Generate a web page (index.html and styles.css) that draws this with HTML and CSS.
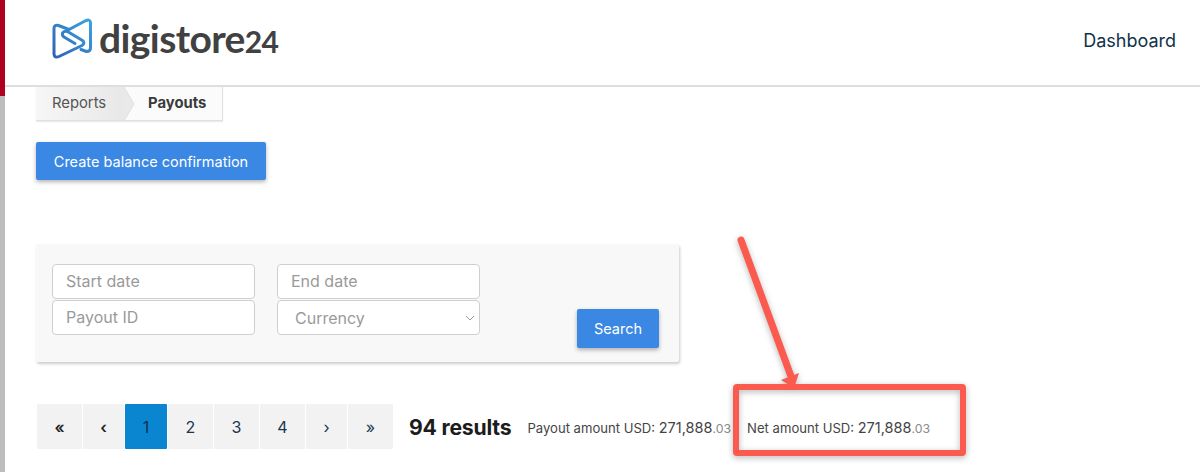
FILE: index.html
```html
<!DOCTYPE html>
<html lang="en">
<head>
<meta charset="utf-8">
<title>Payouts</title>
<link rel="stylesheet" href="styles.css">
</head>
<body>
<div class="rail"><div class="rail-top"></div></div>
<div class="page">
  <header class="header">
    <a class="logo">
      <svg class="logo-mark" width="42" height="42" viewBox="0 0 42 42" fill="none">
        <defs>
          <linearGradient id="lg" x1="0" y1="1" x2="1" y2="0">
            <stop offset="0" stop-color="#2f62b5"/>
            <stop offset="1" stop-color="#38a4df"/>
          </linearGradient>
        </defs>
        <path d="M29 31.500 L34.500 33.500 Q38.500 33.500 38.500 30 L38.500 4.500 Q38 1 34 2.500 L17 11.500 L6.500 7.500 Q2 6.500 2 10.500 L2 36 Q2.500 40.500 7 38.500 L30 27.500 Q33.500 25 30.500 22.500 L15.500 13.500 Q12 12.500 10.500 15 Q10 17.500 12 19 L23 25.500" stroke="url(#lg)" stroke-width="3" stroke-linecap="round" stroke-linejoin="round"/>
      </svg>
      <span class="logo-text">digistore<span class="logo-num">24</span></span>
    </a>
    <a class="nav-link">Dashboard</a>
  </header>
  <main class="main">
    <nav class="crumbs">
      <span class="crumb crumb-first">Reports</span>
      <svg class="crumb-arrow" width="11" height="34" viewBox="0 0 11 34"><path d="M0 0 L10 17 L0 34 Z" fill="#e9e9e9"/><path d="M0 0 L10 17 L0 34" fill="none" stroke="#e0e0e0"/></svg>
      <span class="crumb crumb-current">Payouts</span>
    </nav>
    <button class="btn btn-create">Create balance confirmation</button>
    <section class="filters">
      <div class="fields">
        <input class="field" placeholder="Start date">
        <input class="field" placeholder="End date">
        <input class="field" placeholder="Payout ID">
        <div class="field select">
          <span>Currency</span>
          <svg width="10" height="6" viewBox="0 0 10 6" fill="none"><path d="M1 1 L5 5 L9 1" stroke="#9a9a9a"/></svg>
        </div>
      </div>
      <button class="btn btn-search">Search</button>
    </section>
    <div class="results">
      <ul class="pager">
        <li class="page-item edge">«</li>
        <li class="page-item narrow edge">‹</li>
        <li class="page-item active">1</li>
        <li class="page-item">2</li>
        <li class="page-item">3</li>
        <li class="page-item">4</li>
        <li class="page-item narrow">›</li>
        <li class="page-item">»</li>
      </ul>
      <strong class="count">94 results</strong>
      <span class="amount">Payout amount USD: <b>271,888</b><small>.03</small></span>
      <span class="amount">Net amount USD: <b>271,888</b><small>.03</small></span>
    </div>
  </main>
</div>
<svg class="annotation" width="260" height="240" viewBox="0 0 260 240" fill="none">
  <rect x="6" y="152" width="227" height="66" rx="1" class="anno-box"/>
  <path d="M11 5 L62 144" class="anno-line"/>
  <path d="M51 145 L69 138 L64 153 Z" class="anno-head"/>
</svg>
</body>
</html>
```
FILE: styles.css
```css
* { box-sizing: border-box; }
html, body { margin: 0; padding: 0; }
body {
  width: 1200px;
  height: 472px;
  overflow: hidden;
  background: #fff;
  font-family: Inter, "Liberation Sans", sans-serif;
  display: flex;
  position: relative;
}
.rail { width: 5px; background: #bdbdbd; flex: none; }
.rail-top { height: 96px; background: #b00020; }
.page { flex: 1; min-width: 0; }
.header {
  height: 87px;
  border-bottom: 2px solid #dedede;
  display: flex;
  align-items: flex-start;
  justify-content: space-between;
  padding: 18px 24px 0 47px;
}
.logo { display: flex; align-items: flex-start; gap: 5px; }
.logo-mark { flex: none; }
.logo-text {
  font-family: Lato, sans-serif;
  font-weight: 700;
  font-size: 39px;
  line-height: 40px;
  letter-spacing: -0.6px;
  color: #414141;
}
.logo-num { font-size: 30px; letter-spacing: -0.8px; }
.nav-link {
  font-size: 18px;
  line-height: 22px;
  margin-top: 12px;
  color: #0f3349;
}
.main { padding: 0 0 0 31px; }
.crumbs {
  display: flex;
  width: 187px;
  height: 34px;
  background: #fbfbfb;
  border: solid #e0e0e0;
  border-width: 0 1px 1px 0;
  box-shadow: 0 1px 1px rgba(0,0,0,.08);
  font-size: 14.800px;
  line-height: 33px;
}
.crumb-first {
  width: 88px;
  padding-left: 16px;
  color: #555;
  background: linear-gradient(90deg, #f6f6f6, #e8e8e8);
}
.crumb-arrow { flex: none; }
.crumb-current { padding-left: 13px; font-weight: 700; color: #3a3a3a; }
.btn {
  display: block;
  border: 0;
  border-radius: 2px;
  background: #3a87e4;
  color: #fff;
  font-family: Inter, "Liberation Sans", sans-serif;
  font-size: 14.500px;
  box-shadow: 0 2px 4px rgba(0,0,0,.3);
  padding: 0;
}
.btn-create { width: 230px; height: 38px; margin-top: 21px; }
.filters {
  width: 643px;
  height: 118px;
  margin-top: 64px;
  padding: 20px 20px 14px 16px;
  background: #f8f8f8;
  border-radius: 2px;
  box-shadow: 1px 2px 3px rgba(0,0,0,.2);
  display: flex;
  justify-content: space-between;
  align-items: flex-end;
}
.fields {
  display: grid;
  grid-template-columns: 203px 203px;
  column-gap: 22px;
  row-gap: 1px;
  align-self: flex-start;
}
.field {
  height: 35px;
  padding: 0 13px 2px;
  border: 1px solid #cfcfcf;
  border-radius: 4px;
  background: #fff;
  font-family: Inter, "Liberation Sans", sans-serif;
  font-size: 16px;
  color: #9a9a9a;
  outline: 0;
  width: 100%;
}
.field::placeholder { color: #9a9a9a; opacity: 1; }
.select {
  display: flex;
  align-items: center;
  justify-content: space-between;
  padding: 0 4px 0 17px;
}
.btn-search { width: 82px; height: 39px; }
.results {
  display: flex;
  align-items: center;
  height: 45px;
  margin-top: 42px;
  gap: 16px;
}
.pager {
  display: flex;
  gap: 1px;
  list-style: none;
  margin: 0 0 0 1px;
  padding: 0;
}
.page-item {
  width: 45px;
  height: 45px;
  background: #f2f2f2;
  border-radius: 1px;
  display: flex;
  align-items: center;
  justify-content: center;
  font-size: 16px;
  color: #17364f;
}
.page-item.narrow { width: 41px; }
.page-item.edge { color: #222; font-weight: 600; }
.page-item.active { width: 42px; background: #0a86d1; color: #12324a; }
.count {
  font-size: 21.200px;
  font-weight: 700;
  color: #1c1c1c;
  letter-spacing: -0.2px;
}
.amount {
  padding-top: 2px;
  font-size: 13.100px;
  color: #444;
  white-space: nowrap;
}
.amount b { font-weight: 400; font-size: 14.500px; }
.amount small { font-size: 12.300px; color: #8a8a8a; }
.annotation {
  position: absolute;
  left: 730px;
  top: 235px;
  filter: drop-shadow(0 2px 3px rgba(0,0,0,.28));
}
.anno-box { stroke: #fb5a4e; stroke-width: 6; }
.anno-line { stroke: #fb5a4e; stroke-width: 7; stroke-linecap: round; }
.anno-head { fill: #fb5a4e; }
```
